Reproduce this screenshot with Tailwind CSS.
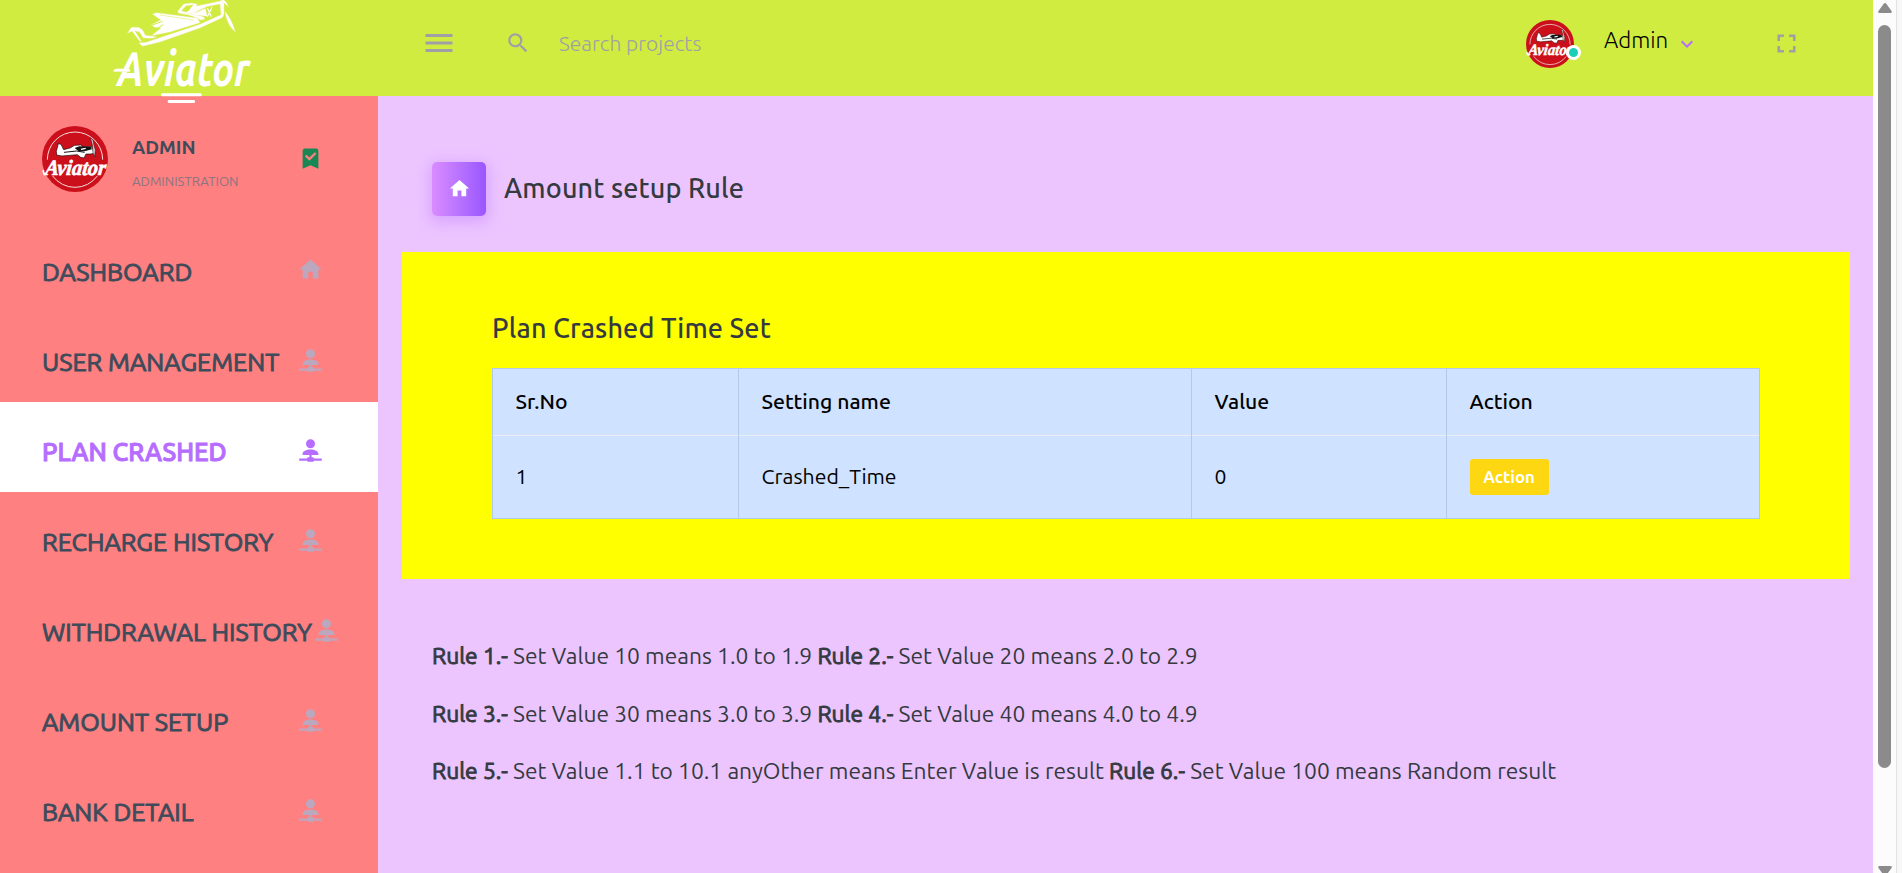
<!DOCTYPE html>
<html lang="en">
<head>
<meta charset="utf-8">
<title>Aviator Admin</title>
<script src="https://cdn.jsdelivr.net/npm/@tailwindcss/browser@4"></script>
</head>
<body class="h-screen overflow-hidden bg-[#ecc5ff] font-['Ubuntu','Noto_Sans',sans-serif] text-[#343a40]">

<!-- Shared icon shapes -->
<svg class="hidden">
  <symbol id="home" viewBox="0 0 24 24"><path d="M10,20V14H14V20H19V12H22L12,3L2,12H5V20H10Z"/></symbol>
  <symbol id="account" viewBox="0 0 24 24"><path d="M13,16V18H14A1,1 0 0,1 15,19H22V21H15A1,1 0 0,1 14,22H10A1,1 0 0,1 9,21H2V19H9A1,1 0 0,1 10,18H11V16H5V14.5C5,12.57 8.13,11 12,11C15.87,11 19,12.57 19,14.5V16H13M12,2A4,4 0 0,1 16,6A4,4 0 0,1 12,10A4,4 0 0,1 8,6A4,4 0 0,1 12,2Z"/></symbol>
  <symbol id="badge" viewBox="0 0 198 198">
    <circle cx="99" cy="99" r="99" fill="#cb101c"/>
    <path d="M16 101A83 83 0 0 1 182 101M32 150A83 83 0 0 0 166 150" fill="none" stroke="#f6dcdc" stroke-width="3"/>
    <path d="M43 76L49 53L57 55L65 71L84 66L98 58L116 57L124 63L144 61L152 66L155 82L147 84L132 84L126 96L116 94L106 86L60 90L44 87Z" fill="#fff" stroke="#1c0608" stroke-width="2"/>
    <path d="M98 66L112 61L146 62L150 70L128 76L110 76Z" fill="#141414"/>
    <path d="M66 79L104 75L128 79M110 67L122 64" fill="none" stroke="#141414" stroke-width="3"/>
    <path d="M116 68L130 65L132 69L118 72Z" fill="#fff"/>
    <path d="M146 37L152 40L156 58L160 72L158 92L153 80L152 60Z" fill="#e8dcdc" stroke="#1c0608" stroke-width="1.5"/>
    <g transform="translate(8 146) skewX(-6) scale(.86 1)">
      <text x="0" y="0" textLength="212" lengthAdjust="spacingAndGlyphs" font-family="Liberation Serif, serif" font-size="66" font-weight="700" font-style="italic" fill="#fff" stroke="#fff" stroke-width="2">Aviator</text>
    </g>
    <path d="M4 132Q2 146 15 144" fill="none" stroke="#fff" stroke-width="5"/>
  </symbol>
</svg>

<div class="flex h-full">
  <div class="flex min-w-0 flex-1 flex-col">

    <!-- Top bar -->
    <header class="flex h-24 shrink-0 bg-[#d1ec41]">
      <div class="flex w-[378px] shrink-0 pl-[110px]">
        <svg class="relative z-10 h-[110px] w-[150px] shrink-0" viewBox="0 0 450 330" fill="#fff" stroke="#f3e3a4" stroke-width="1">
          <path d="M203 34L221 12L244 9L262 12L258 18L300 10L330 3L342 2L342 36Q343 48 335 54L270 84L150 126L98 139L86 129L108 127L180 103L270 73L333 44L330 12L290 20L262 34L252 41L282 51L284 58L272 60L252 50L232 44L206 40Z"/>
          <path d="M214 32L228 17L250 14L236 32L228 37Z" fill="#d1ec41"/>
          <path d="M232 41L262 36L286 25L292 49L262 46Z"/>
          <path d="M292 24L304 50M306 22L292 50" fill="none" stroke="#fff" stroke-width="3.5"/>
          <path d="M127 42L140 38L262 54L270 68L180 96L124 107L153 84L134 82L124 74L152 60Z"/>
          <path d="M150 45L250 60" fill="none" stroke="#d1ec41" stroke-width="1.5"/>
          <path d="M126 75L158 64M134 90L160 74" fill="none" stroke="#d1ec41" stroke-width="3"/>
          <path d="M52 100L64 82L86 82L98 90L106 106L140 110L128 115L100 114L88 96L74 92L96 126L88 122L66 94Z"/>
          <path d="M344 34Q366 58 376 96Q352 78 344 34ZM331 0L350 16L355 22L350 8L342 0Z"/>
          <g transform="translate(22 257) scale(.84 1)">
            <text x="0" y="0" textLength="474" lengthAdjust="spacingAndGlyphs" font-family="Ubuntu, 'Liberation Sans', sans-serif" font-size="146" font-weight="700" font-style="italic" stroke="none">Aviator</text>
          </g>
          <path d="M10 212Q12 206 22 206H60V215H12Z"/>
          <rect x="153" y="280" width="122" height="9" rx="4" stroke="none"/>
          <rect x="173" y="300" width="82" height="9" rx="4" stroke="none"/>
        </svg>
      </div>
      <div class="flex flex-1 items-start text-[#a09fa6]">
        <svg class="mt-[25px] ml-[43px] size-9" viewBox="0 0 24 24" fill="currentColor"><path d="M3,6H21V8H3V6M3,11H21V13H3V11M3,16H21V18H3V16Z"/></svg>
        <svg class="mt-[30px] ml-[48px] size-[26px]" viewBox="0 0 24 24" fill="currentColor"><path d="M9.5,3A6.5,6.5 0 0,1 16,9.5C16,11.11 15.41,12.59 14.44,13.73L14.71,14H15.5L20.5,19L19,20.5L14,15.5V14.71L13.73,14.44C12.59,15.41 11.11,16 9.5,16A6.5,6.5 0 0,1 3,9.5A6.5,6.5 0 0,1 9.5,3M9.5,5C7,5 5,7 5,9.5C5,12 7,14 9.5,14C12,14 14,12 14,9.5C14,7 12,5 9.5,5Z"/></svg>
        <span class="mt-[27px] ml-[28px] text-[21px] leading-8 font-light">Search projects</span>
        <div class="relative mt-5 mr-[30px] ml-auto size-12">
          <svg class="size-12"><use href="#badge"/></svg>
          <span class="absolute top-[24.5px] left-10 size-[15px] rounded-full border-[3px] border-white bg-[#1bcfb4]"></span>
        </div>
        <span class="mt-6 w-[65px] text-[22.3px] leading-8 font-light whitespace-nowrap text-black">Admin</span>
        <svg class="mt-8 ml-[6px] size-6 text-[#b66dff]" viewBox="0 0 24 24" fill="currentColor"><path d="M7.41,8.58L12,13.17L16.59,8.58L18,10L12,16L6,10L7.41,8.58Z"/></svg>
        <svg class="mt-[28px] mr-[71px] ml-[72px] size-[31px]" viewBox="0 0 24 24" fill="currentColor"><path d="M5,5H10V7H7V10H5V5M14,5H19V10H17V7H14V5M17,14H19V19H14V17H17V14M10,17V19H5V14H7V17H10Z"/></svg>
      </div>
    </header>

    <div class="flex min-h-0 flex-1">
      <!-- Sidebar -->
      <aside class="w-[378px] shrink-0 bg-[#fe8080] text-[#3e4b5b]">
        <div class="flex h-[126px] items-start pt-[30px] pl-[42px]">
          <svg class="size-[66px]"><use href="#badge"/></svg>
          <div class="ml-[24px] flex w-[165px] flex-col">
            <span class="mt-[9px] text-[18.9px] leading-6 font-bold">ADMIN</span>
            <span class="mt-[12px] text-[13.2px] leading-5 text-[#8a7580]">ADMINISTRATION</span>
          </div>
          <svg class="mt-[19px] size-[27px] text-[#198754]" viewBox="0 0 24 24" fill="currentColor"><path d="M17,3A2,2 0 0,1 19,5V21L12,18L5,21V5C5,3.89 5.9,3 7,3H17M11,14L17.25,7.76L15.84,6.34L11,11.18L8.41,8.59L7,10L11,14Z"/></svg>
        </div>
        <nav class="text-[25.2px] leading-9 whitespace-nowrap [-webkit-text-stroke:0.9px_currentColor]">
          <a class="flex h-[90px] items-center pl-[42px]"><span class="mt-[9px] w-[255px]">DASHBOARD</span><svg class="mt-[5px] size-[27px] fill-[#bba8bf]"><use href="#home"/></svg></a>
          <a class="flex h-[90px] items-center pl-[42px]"><span class="mt-[9px] w-[255px]">USER MANAGEMENT</span><svg class="mt-[7px] size-[27px] fill-[#bba8bf]"><use href="#account"/></svg></a>
          <a class="flex h-[90px] items-center bg-white pl-[42px] text-[#b66dff]"><span class="mt-[9px] w-[255px] font-medium [-webkit-text-stroke:1px_currentColor]">PLAN CRASHED</span><svg class="mt-[7px] size-[27px] fill-[#b66dff]"><use href="#account"/></svg></a>
          <a class="flex h-[90px] items-center pl-[42px]"><span class="mt-[9px] w-[255px]">RECHARGE HISTORY</span><svg class="mt-[7px] size-[27px] fill-[#bba8bf]"><use href="#account"/></svg></a>
          <a class="flex h-[90px] items-center pl-[42px]"><span class="mt-[9px] w-[271px]">WITHDRAWAL HISTORY</span><svg class="mt-[7px] size-[27px] fill-[#bba8bf]"><use href="#account"/></svg></a>
          <a class="flex h-[90px] items-center pl-[42px]"><span class="mt-[9px] w-[255px]">AMOUNT SETUP</span><svg class="mt-[7px] size-[27px] fill-[#bba8bf]"><use href="#account"/></svg></a>
          <a class="flex h-[90px] items-center pl-[42px]"><span class="mt-[9px] w-[255px]">BANK DETAIL</span><svg class="mt-[7px] size-[27px] fill-[#bba8bf]"><use href="#account"/></svg></a>
        </nav>
      </aside>

      <!-- Page content -->
      <main class="flex-1 px-6 pt-[66px]">
        <div class="flex h-[54px] items-center pl-[30px]">
          <span class="flex size-[54px] items-center justify-center rounded-[5px] bg-linear-to-r from-[#da8cff] to-[#9a55ff] shadow-[0_4px_14px_3px_rgba(182,109,255,0.35)]"><svg class="mt-[-1px] size-[23px] fill-white"><use href="#home"/></svg></span>
          <h3 class="mt-[-2px] ml-[18px] text-[27px] leading-8 font-medium tracking-[0.14px]">Amount setup Rule</h3>
        </div>

        <section class="mt-9 h-[327px] bg-[#ffff00] px-[90px] pt-[60px]">
          <h3 class="text-[27px] leading-8 font-medium tracking-[0.14px]">Plan Crashed Time Set</h3>
          <table class="mt-6 w-[1267px] table-fixed border-collapse border border-[#b4c9e8] bg-[#cfe2ff] text-left text-[21.2px] text-black">
            <colgroup><col class="w-[246px]"><col class="w-[453px]"><col class="w-[255px]"><col class="w-[313px]"></colgroup>
            <thead>
              <tr class="h-[67px] border-b border-[#ebedf2]">
                <th class="border-x border-[#b4c9e8] px-[22.5px] font-medium">Sr.No</th>
                <th class="border-x border-[#b4c9e8] px-[22.5px] font-medium">Setting name</th>
                <th class="border-x border-[#b4c9e8] px-[22.5px] font-medium">Value</th>
                <th class="border-x border-[#b4c9e8] px-[22.5px] font-medium">Action</th>
              </tr>
            </thead>
            <tbody>
              <tr class="h-[83px]">
                <td class="border-x border-[#b4c9e8] px-[22.5px]">1</td>
                <td class="border-x border-[#b4c9e8] px-[22.5px]">Crashed_Time</td>
                <td class="border-x border-[#b4c9e8] px-[22.5px]">0</td>
                <td class="border-x border-[#b4c9e8] px-[22.5px]"><button class="mt-[-1px] block h-9 w-[79px] rounded-[3px] bg-[#fed713] text-[16.7px] leading-9 font-bold text-white">Action</button></td>
              </tr>
            </tbody>
          </table>
        </section>

        <div class="mt-12 pl-[30px] text-[22.75px] leading-[57.5px] whitespace-nowrap">
          <p><b class="font-normal [-webkit-text-stroke:0.9px_currentColor]">Rule 1.-</b> Set Value 10 means 1.0 to 1.9 <b class="font-normal [-webkit-text-stroke:0.9px_currentColor]">Rule 2.-</b> Set Value 20 means 2.0 to 2.9</p>
          <p><b class="font-normal [-webkit-text-stroke:0.9px_currentColor]">Rule 3.-</b> Set Value 30 means 3.0 to 3.9 <b class="font-normal [-webkit-text-stroke:0.9px_currentColor]">Rule 4.-</b> Set Value 40 means 4.0 to 4.9</p>
          <p><b class="font-normal [-webkit-text-stroke:0.9px_currentColor]">Rule 5.-</b> Set Value 1.1 to 10.1 anyOther means Enter Value is result <b class="font-normal [-webkit-text-stroke:0.9px_currentColor]">Rule 6.-</b> Set Value 100 means Random result</p>
        </div>
      </main>
    </div>
  </div>

  <!-- Scrollbar -->
  <div class="flex w-[23px] shrink-0 flex-col items-start bg-[#fcfcfc] pl-[5px]">
    <svg class="mt-[3px] h-[10px] w-[14px] shrink-0" viewBox="0 0 14 10" fill="#8b8b8b"><path d="M5.5 1Q7 -1 8.500 1L13.500 8Q14.500 10 12.500 10H1.500Q-.5 10 .5 8Z"/></svg>
    <div class="mt-3 h-[743px] w-[13px] shrink-0 rounded-full bg-[#8b8b8b]"></div>
    <svg class="mt-[98px] h-[10px] w-[14px] shrink-0" viewBox="0 0 14 10" fill="#8b8b8b"><path d="M5.500 9Q7 11 8.500 9L13.500 2Q14.500 0 12.500 0H1.500Q-.5 0 .5 2Z"/></svg>
  </div>
  <div class="w-[6px] shrink-0 border-l border-[#e2e2e2] bg-[#f8f8f8]"></div>
</div>
</body>
</html>
